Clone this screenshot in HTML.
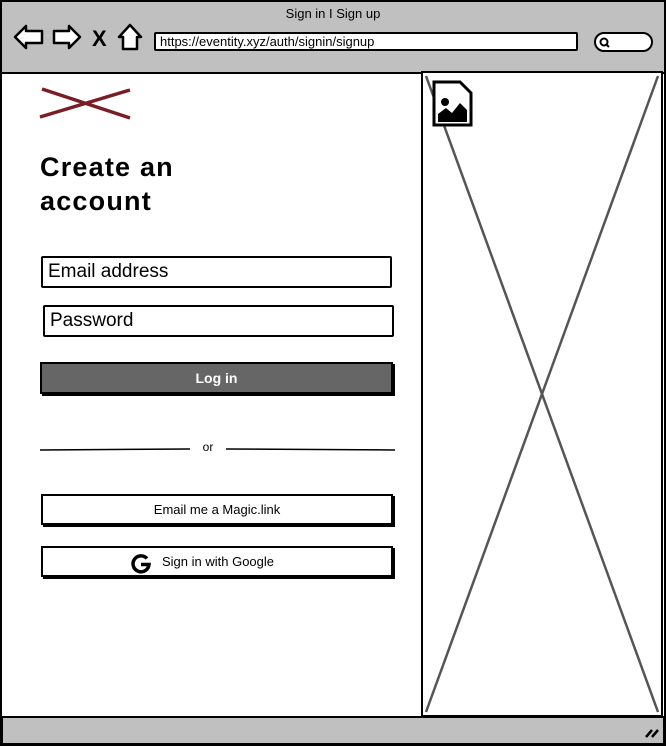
<!DOCTYPE html>
<html><head><meta charset="utf-8"><style>
html,body{margin:0;padding:0;width:666px;height:746px;overflow:hidden;background:#fff;font-family:"Liberation Sans",sans-serif}
.a{position:absolute}
.box{position:absolute;border:2px solid #000;border-radius:2px;background:#fff;box-sizing:border-box}
.btn{position:absolute;box-sizing:border-box;border:2px solid #000;background:#fff;box-shadow:2px 2px 0 #000;font-size:13px;text-align:center;line-height:28px}
</style></head><body>
<div class="a" style="left:0;top:0;width:666px;height:746px;box-sizing:border-box;border:2px solid #000"></div>
<div class="a" style="left:2px;top:2px;width:662px;height:70px;background:#c0c0c0;border-bottom:2px solid #000"></div>
<div class="a" style="left:0;top:6px;width:666px;text-align:center;font-size:13px">Sign in I Sign up</div>
<div class="box" style="left:154px;top:32px;width:424px;height:19px;font-size:13px;line-height:15px;padding-left:4px">https://eventity.xyz/auth/signin/signup</div>
<div class="box" style="left:594px;top:32px;width:59px;height:20px;border-radius:10px"></div>
<svg class="a" style="left:0;top:0" width="666" height="746">
<g fill="#fff" stroke="#000" stroke-width="2.5" stroke-linejoin="round">
<path d="M15 37 L26 26 L26 31 L42 31 L42 43 L26 43 L26 48 Z"/>
<path d="M80 37 L69 26 L69 31 L54 31 L54 43 L69 43 L69 48 Z"/>
<path d="M130 25 L141 37 L137 37 L137 49 L123 49 L123 37 L119 37 Z"/>
</g>
<text x="92" y="46" font-size="22" font-weight="bold" font-family="Liberation Sans">X</text>
<circle cx="604" cy="42" r="3.5" fill="none" stroke="#000" stroke-width="2"/>
<path d="M606 44 L609 47" stroke="#000" stroke-width="2"/>
<path d="M42 89 L130 118 M40 117 L130 90" stroke="#7a1e26" stroke-width="3.5" fill="none"/>
<path d="M422 72 L662 72 L662 716 L422 716 Z" fill="#fff" stroke="#000" stroke-width="2"/>
<path d="M426 76 L658 712 M658 76 L426 712" stroke="#555" stroke-width="2.5"/>
<path d="M434 82 L460 82 L471 93 L471 125 L434 125 Z" fill="#fff" stroke="#000" stroke-width="3"/>
<circle cx="445" cy="102" r="4" fill="#000"/>
<path d="M438 122 L438 114 L446 108 L452 113 L460 103 L467 110 L467 122 Z" fill="#000"/>
<path d="M2 717 L664 717 L664 744 L2 744 Z" fill="#c0c0c0" stroke="#000" stroke-width="2"/>
<path d="M646 737 L652 730 M652 737 L658 730" stroke="#000" stroke-width="2.5"/>
<path d="M40 450 L190 449 M226 449 L395 450" stroke="#000" stroke-width="1.5"/>
</svg>
<div class="a" style="left:40px;top:150px;font-size:27px;font-weight:bold;line-height:34px;letter-spacing:1.2px">Create an<br>account</div>
<div class="box" style="left:41px;top:256px;width:351px;height:32px;font-size:19px;line-height:28px;padding-left:5px">Email address</div>
<div class="box" style="left:43px;top:305px;width:351px;height:32px;font-size:19px;line-height:28px;padding-left:5px">Password</div>
<div class="btn" style="left:40px;top:362px;width:353px;height:32px;background:#666;color:#fff;font-weight:bold;font-size:14px">Log in</div>
<div class="a" style="left:190px;top:440px;width:36px;text-align:center;font-size:12px">or</div>
<div class="btn" style="left:41px;top:494px;width:352px;height:31px">Email me a Magic.link</div>
<div class="btn" style="left:41px;top:546px;width:352px;height:31px;padding-left:36px;text-align:left;padding-left:119px">Sign in with Google</div>
<svg class="a" style="left:129px;top:551px" width="24" height="24">
<path d="M18 7.5 A8 8 0 1 0 20 13.5 L12 13.5" fill="none" stroke="#000" stroke-width="3.5"/>
</svg>
</body></html>
